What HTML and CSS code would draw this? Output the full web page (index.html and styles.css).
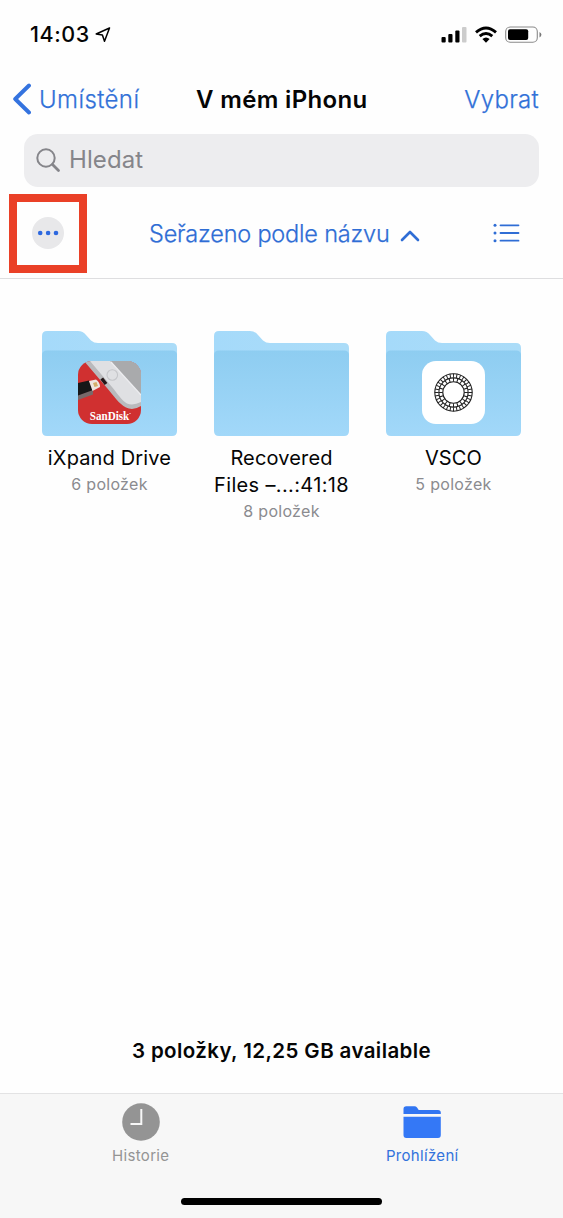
FILE: index.html
```html
<!DOCTYPE html>
<html lang="cs">
<head>
<meta charset="utf-8">
<title>V mém iPhonu</title>
<link rel="stylesheet" href="styles.css">
</head>
<body>
<svg class="defs" width="0" height="0" aria-hidden="true">
  <defs>
    <linearGradient id="front" x1="0" y1="0" x2="0" y2="1"><stop offset="0" stop-color="#8ecdf1"/><stop offset="1" stop-color="#a2d8f9"/></linearGradient>
    <linearGradient id="back" x1="0" y1="0" x2="1" y2="0"><stop offset="0" stop-color="#a5dafa"/><stop offset="1" stop-color="#abdcf8"/></linearGradient>
    <clipPath id="app"><rect width="63" height="63" rx="14"/></clipPath>
    <symbol id="folder" viewBox="0 0 135 105">
      <path fill="url(#back)" d="M0 5Q0 0 5 0H36Q41 0 44 4L49 9.500Q52 12 56 12H130Q135 12 135 17V60H0Z"/>
      <path fill="url(#front)" d="M0 24Q0 19.500 5 19.500H130Q135 19.500 135 24V100Q135 105 130 105H5Q0 105 0 100Z"/>
    </symbol>
  </defs>
</svg>
<div class="screen">
  <header class="status">
    <span class="time">14:03</span>
    <svg class="location" width="16" height="16" viewBox="0 0 16 16"><path d="M14.500 1L1.200 7L7.400 8L9.500 14.300Z" fill="none" stroke="#000" stroke-width="1.500" stroke-linejoin="round"/></svg>
    <svg class="indicators" width="102" height="18" viewBox="0 0 102 18">
      <rect x="0.500" y="11" width="4.200" height="5.500" rx="1"/><rect x="7.300" y="8" width="4.200" height="8.500" rx="1"/><rect x="14.300" y="4.500" width="4.200" height="12" rx="1"/><rect x="21" y="1" width="4.500" height="15.500" rx="1" fill="#ccc"/>
      <g fill="none" stroke="#000" stroke-width="2.900"><path d="M35 6.300Q45 -2.300 55 6.300"/><path d="M38.700 10.200Q45 4.800 51.300 10.200"/></g>
      <path d="M41.400 13Q45 10 48.600 13L45 16.800Z"/>
      <rect x="64.700" y="1" width="31.600" height="15.300" rx="4.500" fill="none" stroke="#8a8a8a" stroke-width="1.100"/>
      <rect x="67" y="3.300" width="20.200" height="10.700" rx="2"/>
      <path d="M98.500 6Q100.400 7 100.400 8.700Q100.400 10.400 98.500 11.400Z" fill="#777"/>
    </svg>
  </header>
  <nav class="nav">
    <a class="back"><svg width="19" height="32" viewBox="0 0 19 32"><path d="M17 2.500L3.200 16L17 29.500" fill="none" stroke="#3473df" stroke-width="3.900" stroke-linecap="round" stroke-linejoin="round"/></svg><span class="back-label">Umístění</span></a>
    <h1 class="title">V mém iPhonu</h1>
    <a class="select">Vybrat</a>
  </nav>
  <div class="search">
    <svg width="25" height="25" viewBox="0 0 25 25"><circle cx="10" cy="10" r="8.700" fill="none" stroke="#85858a" stroke-width="2"/><path d="M16.500 16.500L22.500 22.500" stroke="#85858a" stroke-width="2.800" stroke-linecap="round"/></svg>
    <span class="placeholder">Hledat</span>
  </div>
  <div class="toolbar">
    <div class="highlight"><svg width="32" height="32" viewBox="0 0 32 32"><circle cx="16" cy="16" r="16" fill="#e8e8ea"/><g fill="#2d68df"><circle cx="8.200" cy="16" r="2.300"/><circle cx="16.100" cy="16" r="2.300"/><circle cx="24" cy="16" r="2.300"/></g></svg></div>
    <div class="sort"><span class="sort-label">Seřazeno podle názvu</span><svg width="20" height="13" viewBox="0 0 20 13"><path d="M2 11L10 3L18 11" fill="none" stroke="#2f6dd5" stroke-width="2.600" stroke-linecap="round" stroke-linejoin="round"/></svg></div>
    <svg class="list" width="27" height="20" viewBox="0 0 27 20"><g fill="#2f6dd5"><circle cx="2" cy="2.300" r="1.500"/><circle cx="2" cy="10" r="1.500"/><circle cx="2" cy="17.700" r="1.500"/></g><path d="M7.500 2.300H25.500M7.500 10H25.500M7.500 17.700H25.500" stroke="#2f6dd5" stroke-width="1.800" stroke-linecap="round"/></svg>
  </div>
  <main class="grid">
    <section class="item">
      <div class="folder"><svg class="folder-art" width="135" height="105"><use href="#folder"/></svg>
        <svg class="app-icon" width="63" height="63" viewBox="0 0 63 63"><g clip-path="url(#app)">
          <rect width="63" height="63" fill="#d03030"/>
          <path d="M6 0H63V45Q55 50 48 46.500C41 43 36 35 29 27Z" fill="#b9babd"/>
          <path d="M33 0H63V36Z" fill="#a9aaac"/>
          <path d="M12 0H32L63 34V41Q55 45 49 42.500C44 40 39 32 34 26Z" fill="#dfe0e3"/>
          <path d="M33 1L63 34" fill="none" stroke="#ededf0" stroke-width="1.200"/>
          <circle cx="34.300" cy="14" r="5.300" fill="none" stroke="#c5c6ca" stroke-width="1.100"/>
          <path d="M23.700 17.500L28 23" stroke="#251718" stroke-width="3.400"/>
          <path d="M0 34L15 28.500V33.500L0 39Z" fill="#77696a"/>
          <path d="M0 22L11 19.500L15 29L0 34.500Z" fill="#171718"/>
          <path d="M11 20L18 18.500Q22 21 22 26L14.500 30Z" fill="#eee4df"/>
          <path d="M15 22L18.500 21L20 25L16.500 26Z" fill="#d3ae69"/>
          <text class="brand" x="31.500" y="58.500" text-anchor="middle" textLength="39.500" lengthAdjust="spacingAndGlyphs">SanDisk</text>
          <circle cx="52" cy="52.500" r=".6" fill="#fff"/>
        </g></svg></div>
      <h2 class="name name-drive">iXpand Drive</h2><p class="count">6 položek</p>
    </section>
    <section class="item">
      <div class="folder"><svg class="folder-art" width="135" height="105"><use href="#folder"/></svg></div>
      <h2 class="name name-files">Recovered<br><span class="name-range">Files –...:41:18</span></h2><p class="count">8 položek</p>
    </section>
    <section class="item">
      <div class="folder"><svg class="folder-art" width="135" height="105"><use href="#folder"/></svg>
        <svg class="app-icon" width="63" height="63" viewBox="0 0 63 63"><rect width="63" height="63" rx="14" fill="#fff"/>
          <g fill="none" stroke="#222" stroke-width="1.100"><circle cx="31.500" cy="31.500" r="18.700"/><circle cx="31.500" cy="31.500" r="14.600"/><circle cx="31.500" cy="31.500" r="10.700"/>
          <circle cx="31.500" cy="31.500" r="16.700" stroke-width="4" pathLength="256" stroke-dasharray="2.400 5.600" stroke-dashoffset="1.200"/>
          <circle cx="31.500" cy="31.500" r="12.600" stroke-width="3.800" pathLength="200" stroke-dasharray="2.600 7.400" stroke-dashoffset="1.300"/></g></svg></div>
      <h2 class="name name-vsco">VSCO</h2><p class="count">5 položek</p>
    </section>
  </main>
  <p class="summary">3 položky, 12,25 GB available</p>
  <footer class="tabs">
    <a class="tab"><svg width="38" height="38" viewBox="0 0 38 38"><circle cx="19" cy="19" r="18.800" fill="#949494"/><path d="M19.300 6V21H8.500" fill="none" stroke="#f7f7f7" stroke-width="2"/></svg><span class="tab-label history">Historie</span></a>
    <a class="tab active"><svg width="38" height="38" viewBox="0 0 38 38"><path d="M.5 11V6Q.5 3.200 3.300 3.200H11.500Q13 3.200 14 4.500L15.700 7H35Q37.800 7 37.800 9.500V11Z" fill="#3175f2"/><path d="M.5 13.700H37.800V32Q37.800 35 35 35H3.300Q.5 35 .5 32Z" fill="#3478f6"/></svg><span class="tab-label browse">Prohlížení</span></a>
    <div class="home-bar"></div>
  </footer>
</div>
</body>
</html>
```
FILE: styles.css
```css
* { box-sizing: border-box; }
body { margin: 0; background: #fefefe; color: #050505; font-family: Inter, "Noto Sans", sans-serif; }
h1, h2, p { margin: 0; }
svg { display: block; flex-shrink: 0; }
.defs { position: absolute; }
.screen { width: 563px; height: 1218px; display: flex; flex-direction: column; overflow: hidden; white-space: nowrap; }
.status { height: 70px; display: flex; align-items: center; padding: 0 20px 0 30px; }
.time { font-size: 21.500px; font-weight: 500; letter-spacing: 0.600px; width: 65px; margin-bottom: 2px; }
.location { margin-bottom: 1px; }
.indicators { margin-left: auto; margin-bottom: 1px; }
.nav { height: 64px; display: grid; grid-template-columns: 184px 1fr auto; align-items: center; padding: 0 24px 6px 12px; color: #3271d8; font-size: 24px; }
.back { display: flex; align-items: center; gap: 8px; }
.back-label { font-weight: 300; letter-spacing: 0.400px; }
.title { color: #050505; font-size: 24px; font-weight: 600; letter-spacing: 0.350px; }
.select { font-weight: 300; letter-spacing: 0.300px; }
.back-label, .select, .sort-label { -webkit-text-stroke: 0.250px currentColor; }
.search { height: 53px; margin: 0 24px; flex-shrink: 0; display: flex; align-items: center; gap: 8px; padding-left: 12px; border-radius: 14px; background: #ededef; color: #85858a; font-size: 24px; }
.placeholder { font-weight: 400; letter-spacing: 0.100px; margin-bottom: 2px; }
.toolbar { height: 92px; display: flex; align-items: center; padding: 1px 0 0 9px; border-bottom: 1px solid #dedee0; color: #2f6dd5; }
.highlight { width: 78px; height: 79px; display: flex; align-items: center; justify-content: center; border: 8px solid #ea4027; }
.sort { display: flex; align-items: center; justify-content: space-between; width: 271px; margin-left: 62px; }
.sort-label { font-size: 23.500px; font-weight: 300; letter-spacing: -0.200px; }
.sort svg { margin-top: 5px; }
.list { margin-left: 73px; }
.grid { flex: 1; display: grid; grid-template-columns: repeat(3, 135px); column-gap: 37px; align-items: start; padding: 52px 42px 0; }
.item { text-align: center; }
.folder { display: grid; justify-items: center; }
.folder-art, .app-icon { grid-area: 1 / 1; }
.app-icon { margin-top: 30px; }
.brand { font: 700 12px "Liberation Serif", serif; fill: #fff; }
.name { margin-top: 9px; font-size: 20px; line-height: 27px; font-weight: 400; letter-spacing: 0.150px; }
.name-range { letter-spacing: 0.350px; }
.count { font-size: 16px; line-height: 25px; font-weight: 400; letter-spacing: 0.300px; color: #8b8b8f; }
.summary { height: 84px; text-align: center; line-height: 1; font-size: 20.500px; font-weight: 600; letter-spacing: 0.400px; padding-top: 32px; }
.tabs { height: 125px; display: grid; grid-template-columns: 1fr 1fr; grid-template-rows: 104px 1fr; border-top: 1px solid #e3e3e4; background: #f7f7f7; }
.tab { display: flex; flex-direction: column; align-items: center; padding-top: 9px; color: #949494; }
.tab-label { font-size: 15px; line-height: 20px; margin-top: 5px; letter-spacing: 0.320px; }
.active { color: #3272dc; }
.home-bar { grid-column: 1 / 3; justify-self: center; width: 201px; height: 7px; border-radius: 4px; background: #000; }
```
